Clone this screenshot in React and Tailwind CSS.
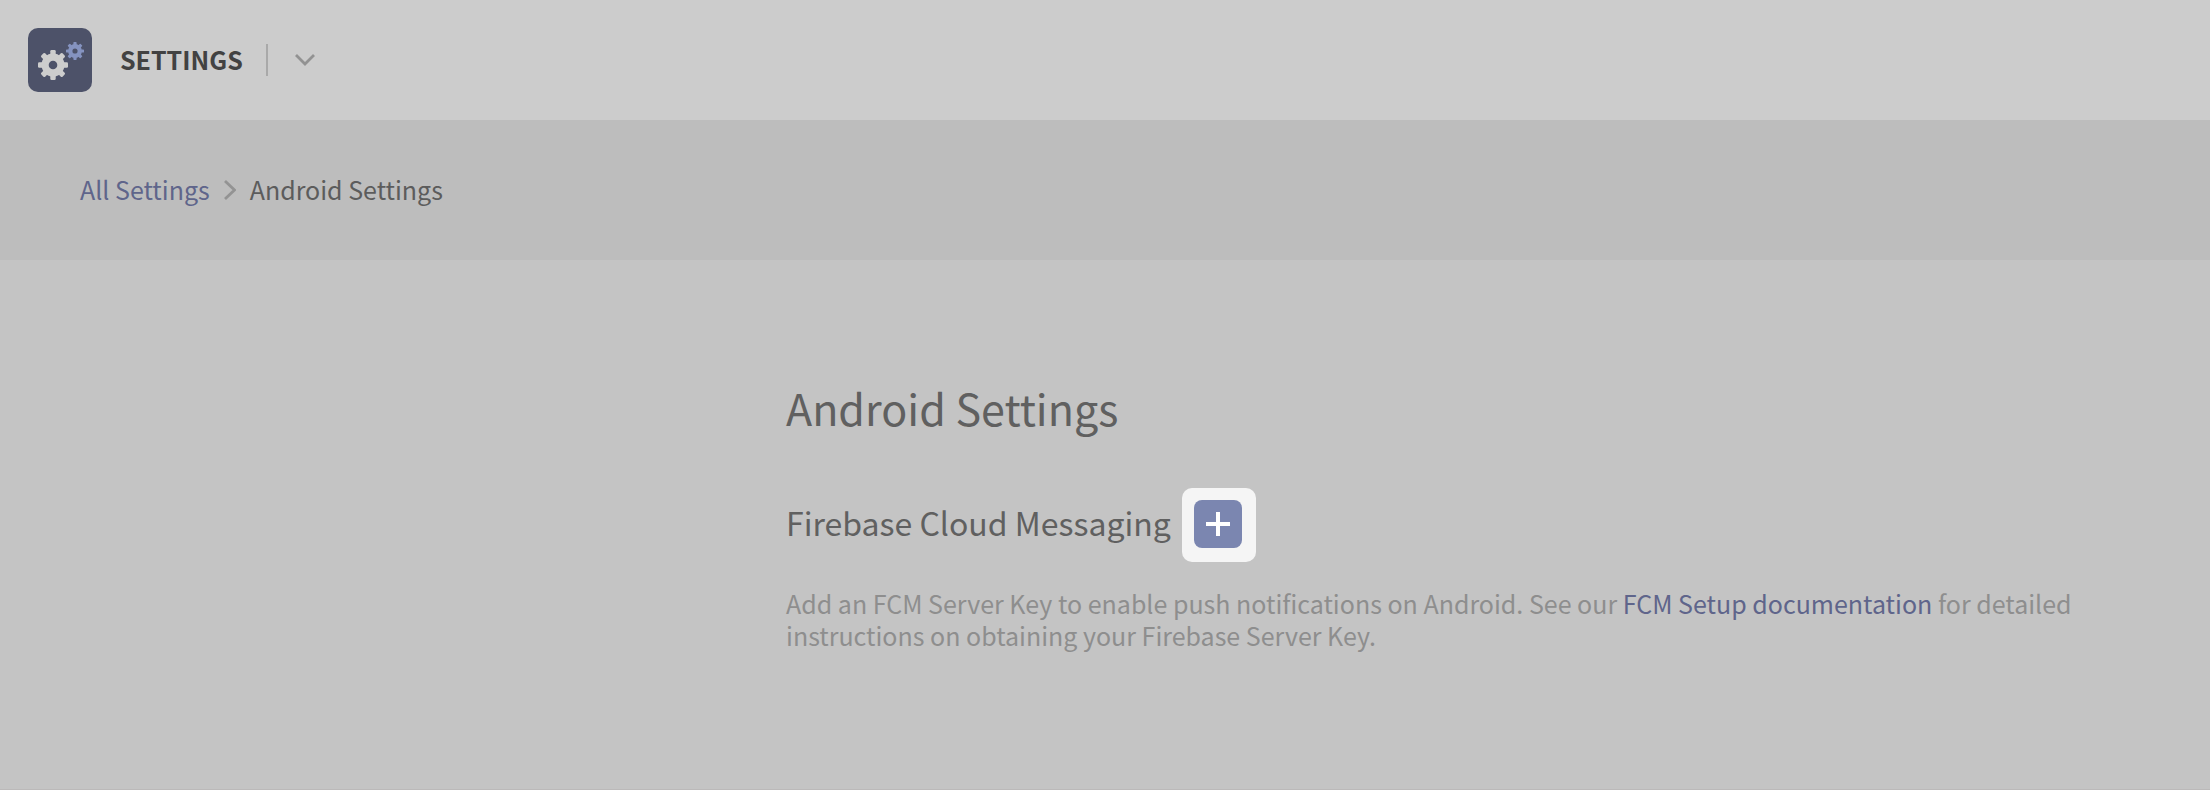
function Gear({ cx, cy, scale, fill }) {
  return (
    <g transform={`translate(${cx} ${cy}) scale(${scale})`} fill={fill}>
      {[0, 45, 90, 135].map((angle) => (
        <rect
          key={angle}
          x="-2.7"
          y="-15"
          width="5.4"
          height="30"
          rx="1.2"
          transform={`rotate(${angle})`}
        />
      ))}
      <circle r="11.5" />
      <circle r="4.3" fill="#4d5269" />
    </g>
  );
}

function Header() {
  return (
    <header className="flex h-[120px] items-center bg-[#cccccc] px-7">
      <svg viewBox="0 0 64 64" className="size-16 shrink-0" aria-hidden="true">
        <rect width="64" height="64" rx="10" fill="#4d5269" />
        <Gear cx={25} cy={37} scale={1} fill="#cdcdcd" />
        <Gear cx={47} cy={23} scale={0.6} fill="#8593c0" />
      </svg>
      <span className="ml-7 pb-0.5 text-[25px] leading-8 font-bold text-[#424242]">SETTINGS</span>
      <span className="ml-[23px] h-8 w-0.5 bg-[#a9a9a9]" />
      <button type="button" aria-label="Open menu" className="ml-[23px] flex h-10 w-7 items-center justify-center">
        <svg viewBox="0 0 20 12" className="h-3 w-5" fill="none" stroke="#929292" strokeWidth="2.8" aria-hidden="true">
          <path d="M1 1 L10 10 L19 1" />
        </svg>
      </button>
    </header>
  );
}

function Breadcrumb() {
  return (
    <nav aria-label="Breadcrumb" className="h-[140px] bg-[#bdbdbd] px-20 pt-[53px]">
      <ol className="flex items-center text-[25px] leading-8">
        <li>
          <a href="#settings" className="text-[#5f658b]">All Settings</a>
        </li>
        <li aria-hidden="true" className="mx-3.5 pt-0.5">
          <svg viewBox="0 0 12 20" className="h-5 w-3" fill="none" stroke="#939393" strokeWidth="2.8">
            <path d="M1 1 L10.5 10 L1 19" />
          </svg>
        </li>
        <li aria-current="page" className="text-[#5c5c5c]">Android Settings</li>
      </ol>
    </nav>
  );
}

export default function App() {
  return (
    <div className="flex min-h-screen flex-col border-b border-[#bbb9b9] bg-[#c4c4c4] font-['Noto_Sans_CJK_SC',sans-serif]">
      <Header />
      <Breadcrumb />
      <main className="px-20 pt-[117px] pb-20 xl:pl-[786px]">
        <h1 className="text-[43px] leading-[60px] text-[#606060]">Android Settings</h1>
        <div className="mt-[51px] flex items-center gap-[11px]">
          <h2 className="pb-1.5 text-[32px] leading-10 text-[#606060]">Firebase Cloud Messaging</h2>
          <div className="rounded-[10px] bg-[#f5f5f5] pt-3 pr-3.5 pb-3.5 pl-3">
            <button
              type="button"
              aria-label="Add FCM server key"
              className="flex size-12 items-center justify-center rounded-lg bg-[#7b86b0]"
            >
              <svg viewBox="0 0 24 24" className="size-6" fill="none" stroke="#ffffff" strokeWidth="4" aria-hidden="true">
                <path d="M12 0 V24 M0 12 H24" />
              </svg>
            </button>
          </div>
        </div>
        <p className="mt-[25px] max-w-[1310px] text-[25px] leading-8 text-[#8e8e8e]">
          Add an FCM Server Key to enable push notifications on Android. See our{" "}
          <a href="#fcm-setup" className="text-[#5f658b]">FCM Setup documentation</a> for detailed
          instructions on obtaining your Firebase Server Key.
        </p>
      </main>
    </div>
  );
}
